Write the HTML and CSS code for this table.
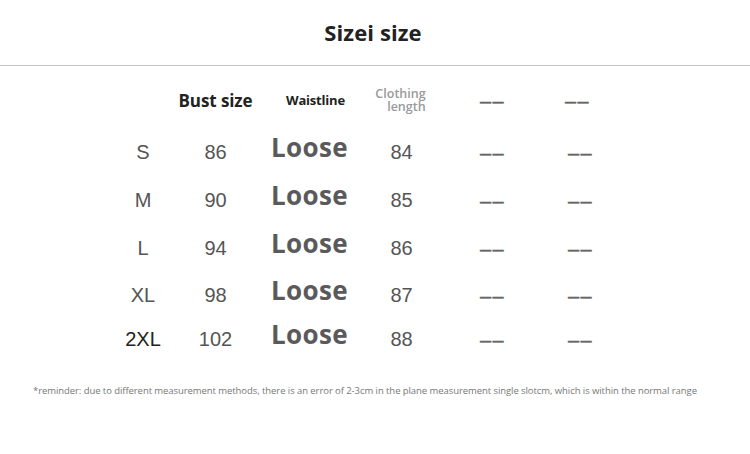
FILE: index.html
```html
<!DOCTYPE html>
<html>
<head>
<meta charset="utf-8">
<link rel="stylesheet" href="styles.css">
</head>
<body>
<header class="title-bar"><h1 class="title">Sizei size</h1></header>
<div class="size-table">
  <div class="cell"></div>
  <div class="cell head-bust">Bust size</div>
  <div class="cell head-waist">Waistline</div>
  <div class="cell head-length">Clothing<br>length</div>
  <div class="cell dash">––</div>
  <div class="cell dash">––</div>

  <div class="cell size">S</div>
  <div class="cell num">86</div>
  <div class="cell loose">Loose</div>
  <div class="cell num">84</div>
  <div class="cell dash">––</div>
  <div class="cell dash shift">––</div>

  <div class="cell size">M</div>
  <div class="cell num">90</div>
  <div class="cell loose">Loose</div>
  <div class="cell num">85</div>
  <div class="cell dash">––</div>
  <div class="cell dash shift">––</div>

  <div class="cell size">L</div>
  <div class="cell num">94</div>
  <div class="cell loose">Loose</div>
  <div class="cell num">86</div>
  <div class="cell dash">––</div>
  <div class="cell dash shift">––</div>

  <div class="cell size">XL</div>
  <div class="cell num">98</div>
  <div class="cell loose">Loose</div>
  <div class="cell num">87</div>
  <div class="cell dash">––</div>
  <div class="cell dash shift">––</div>

  <div class="cell size dark">2XL</div>
  <div class="cell num">102</div>
  <div class="cell loose">Loose</div>
  <div class="cell num">88</div>
  <div class="cell dash">––</div>
  <div class="cell dash shift">––</div>
</div>
<p class="note">*reminder: due to different measurement methods, there is an error of 2-3cm in the plane measurement single slotcm, which is within the normal range</p>
</body>
</html>
```
FILE: styles.css
```css
html, body {
  margin: 0;
  padding: 0;
  background: #fff;
}
body {
  width: 750px;
  height: 454px;
  overflow: hidden;
  font-family: "Liberation Sans", Arial, sans-serif;
}
.title-bar {
  height: 65px;
  border-bottom: 1px solid #c6c6c6;
  display: flex;
  align-items: center;
  justify-content: center;
}
.title {
  margin: 0 4px 2px 0;
  font-family: "Open Sans", sans-serif;
  font-weight: 700;
  font-size: 22px;
  color: #222;
  letter-spacing: 0.1px;
}
.size-table {
  margin-top: 6px;
  margin-left: 107px;
  display: grid;
  grid-template-columns: 72px 73px 115px 69px 111px 59px;
  grid-template-rows: 56px 48px 48px 48px 46px 42px;
  justify-items: center;
  align-items: center;
}
.cell {
  white-space: nowrap;
}
.head-bust {
  font-family: "Open Sans", sans-serif;
  font-weight: 700;
  font-size: 17px;
  color: #222;
  letter-spacing: -0.1px;
}
.head-waist {
  font-family: "Open Sans", sans-serif;
  font-weight: 700;
  font-size: 13px;
  color: #222;
  letter-spacing: -0.2px;
  margin-left: 12px;
}
.head-length {
  font-family: "Open Sans", sans-serif;
  font-weight: 600;
  font-size: 12.5px;
  line-height: 13.5px;
  color: #9a9a9a;
  text-align: right;
  margin-right: 2px;
}
.size, .num {
  font-size: 20px;
  color: #555;
}
.size.dark {
  color: #222;
}
.loose {
  font-family: "Open Sans", sans-serif;
  font-weight: 700;
  font-size: 26px;
  color: #5a5a5a;
  letter-spacing: 0.4px;
  margin-bottom: 10px;
}
.dash {
  font-size: 20px;
  color: #666;
  letter-spacing: 1.5px;
  margin-top: 2px;
  margin-left: 2px;
  -webkit-text-stroke: 0.4px #666;
}
.dash.shift {
  margin-left: 8px;
}
.note {
  margin: 24px 0 0 33px;
  font-family: "Open Sans", sans-serif;
  font-size: 9.5px;
  color: #777;
  letter-spacing: -0.07px;
  white-space: nowrap;
}
```
